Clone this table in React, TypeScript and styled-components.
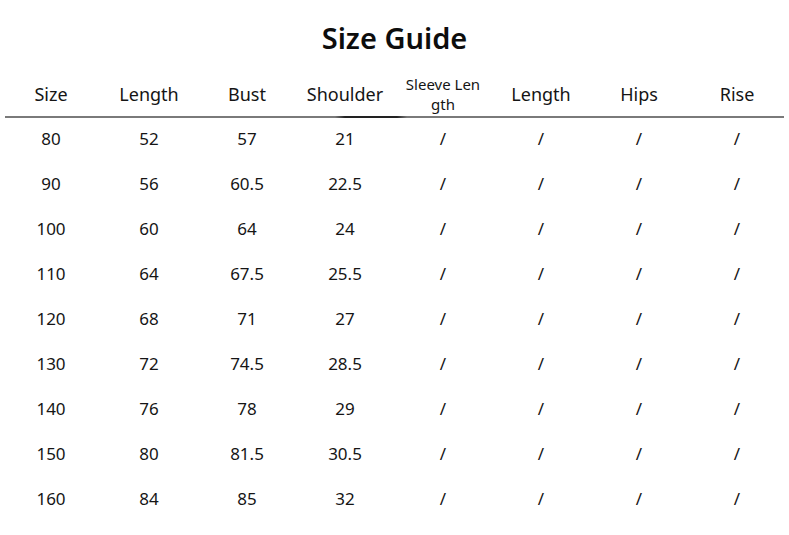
import React from "react";
import styled, { createGlobalStyle } from "styled-components";

const Global = createGlobalStyle`
  html, body { margin: 0; padding: 0; background: #fff; }
  body { font-family: "Noto Sans", "Open Sans", sans-serif; color: #111; }
`;

const Page = styled.div`
  width: 789px;
  height: 535px;
  background: #fff;
  padding-top: 18px;
  box-sizing: border-box;
`;

const Title = styled.h1`
  margin: 0;
  height: 40px;
  line-height: 40px;
  text-align: center;
  font-size: 29px;
  font-weight: 600;
  color: #0d0d0d;
`;

const Table = styled.div`
  margin: 15px 0 0 2px;
  width: 784px;
`;

const Row = styled.div<{ $header?: boolean }>`
  display: grid;
  grid-template-columns: repeat(8, 98px);
  box-sizing: border-box;
  height: ${(p) => (p.$header ? "43px" : "45px")};
  padding-bottom: ${(p) => (p.$header ? "2px" : "0")};
  align-items: ${(p) => (p.$header ? "center" : "start")};
`;

const Cell = styled.div<{ $header?: boolean; $small?: boolean }>`
  text-align: center;
  font-size: ${(p) => (p.$small ? "15px" : p.$header ? "18px" : "17px")};
  line-height: ${(p) => (p.$small ? "20px" : p.$header ? "24px" : "42px")};
  color: #151515;
`;

const Rule = styled.div`
  margin: 0 0 0 3px;
  width: 779px;
  height: 2px;
  background: linear-gradient(
    to right,
    #7a7a7a 0,
    #7a7a7a 330px,
    #222 340px,
    #222 392px,
    #7a7a7a 402px,
    #7a7a7a 100%
  );
`;

const headers = ["Size", "Length", "Bust", "Shoulder", "SLEEVE", "Length", "Hips", "Rise"];

const data: string[][] = [
  ["80", "52", "57", "21"],
  ["90", "56", "60.5", "22.5"],
  ["100", "60", "64", "24"],
  ["110", "64", "67.5", "25.5"],
  ["120", "68", "71", "27"],
  ["130", "72", "74.5", "28.5"],
  ["140", "76", "78", "29"],
  ["150", "80", "81.5", "30.5"],
  ["160", "84", "85", "32"],
];

export default function App() {
  return (
    <Page>
      <Global />
      <Title>Size Guide</Title>
      <Table>
        <Row $header>
          {headers.map((h, i) =>
            h === "SLEEVE" ? (
              <Cell key={i} $header $small>
                Sleeve Len
                <br />
                gth
              </Cell>
            ) : (
              <Cell key={i} $header>
                {h}
              </Cell>
            )
          )}
        </Row>
        <Rule />
        {data.map((r, i) => (
          <Row key={i}>
            {[...r, "/", "/", "/", "/"].map((v, j) => (
              <Cell key={j}>{v}</Cell>
            ))}
          </Row>
        ))}
      </Table>
    </Page>
  );
}
